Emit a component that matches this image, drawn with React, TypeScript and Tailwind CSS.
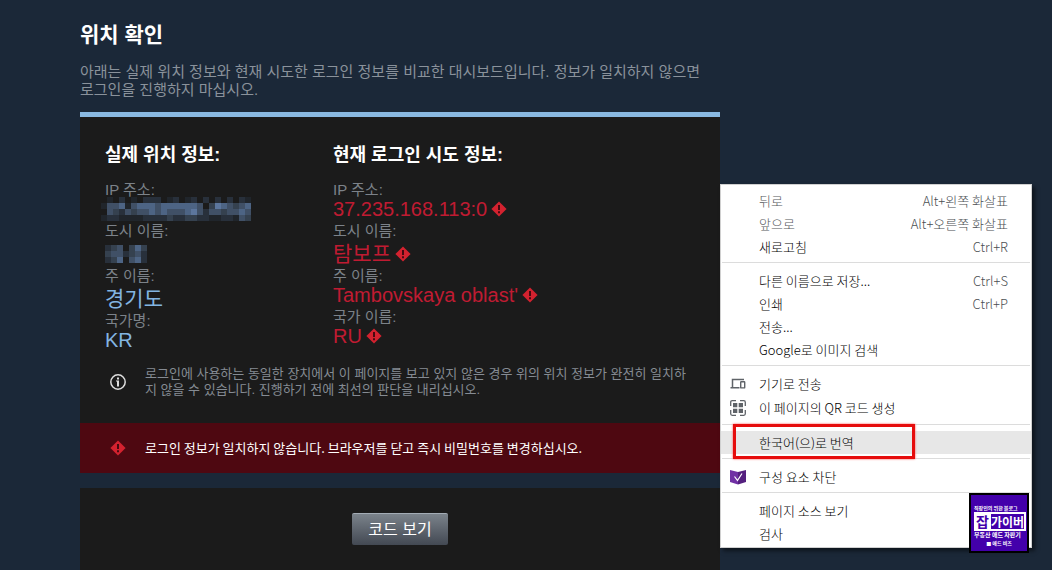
import { clsx } from "clsx";

const palette = ["transparent", "#20252b", "#28303b", "#35414f", "#405066", "#4d6484", "#5c769d"];

const ipMosaic = [
  "0102010222012012020202021",
  "1445145554555555403654345",
  "0432434454544456424434454",
  "1221111222232233221122143",
];

const cityMosaic = ["2340353", "3442342", "2350452"];

type Row = {
  label: string;
  value?: string;
  mosaic?: string[];
  tall?: boolean;
};

const realLocation: Row[] = [
  { label: "IP 주소:", mosaic: ipMosaic },
  { label: "도시 이름:", mosaic: cityMosaic, tall: true },
  { label: "주 이름:", value: "경기도", tall: true },
  { label: "국가명:", value: "KR" },
];

const loginAttempt: Row[] = [
  { label: "IP 주소:", value: "37.235.168.113:0" },
  { label: "도시 이름:", value: "탐보프", tall: true },
  { label: "주 이름:", value: "Tambovskaya oblast'" },
  { label: "국가 이름:", value: "RU" },
];

type MenuItem = {
  label: string;
  shortcut?: string;
  disabled?: boolean;
  active?: boolean;
  icon?: "devices" | "qr" | "shield";
};

const menuGroups: MenuItem[][] = [
  [
    { label: "뒤로", shortcut: "Alt+왼쪽 화살표", disabled: true },
    { label: "앞으로", shortcut: "Alt+오른쪽 화살표", disabled: true },
    { label: "새로고침", shortcut: "Ctrl+R" },
  ],
  [
    { label: "다른 이름으로 저장...", shortcut: "Ctrl+S" },
    { label: "인쇄", shortcut: "Ctrl+P" },
    { label: "전송..." },
    { label: "Google로 이미지 검색" },
  ],
  [
    { label: "기기로 전송", icon: "devices" },
    { label: "이 페이지의 QR 코드 생성", icon: "qr" },
  ],
  [{ label: "한국어(으)로 번역", active: true }],
  [{ label: "구성 요소 차단", icon: "shield" }],
  [{ label: "페이지 소스 보기" }, { label: "검사" }],
];

function Mosaic({ rows }: { rows: string[] }) {
  return (
    <svg
      width={rows[0].length * 6}
      height={rows.length * 6}
      shapeRendering="crispEdges"
      className="shrink-0"
      aria-hidden="true"
    >
      {rows.map((row, y) =>
        row.split("").map((cell, x) => (
          <rect key={`${x}-${y}`} x={x * 6} y={y * 6} width="6" height="6" fill={palette[Number(cell)]} />
        ))
      )}
    </svg>
  );
}

function WarningIcon() {
  return (
    <svg width="16" height="16" viewBox="0 0 16 16" className="shrink-0" aria-hidden="true">
      <path d="M8 .4 15.6 8 8 15.6.4 8Z" fill="#d3222f" />
      <path d="M7 4h2v5H7zM7 10.2h2v2H7z" fill="#450a10" />
    </svg>
  );
}

function InfoIcon() {
  return (
    <svg width="16" height="16" viewBox="0 0 16 16" className="shrink-0" aria-hidden="true">
      <circle cx="8" cy="8" r="7.2" fill="none" stroke="#dedede" strokeWidth="1.5" />
      <path d="M7 3.4h2v2H7zM6 6.4h3v6H7v-5H6z" fill="#dedede" />
    </svg>
  );
}

function MenuIcon({ name }: { name: MenuItem["icon"] }) {
  if (name === "devices") {
    return (
      <svg width="16" height="16" viewBox="0 0 16 16" aria-hidden="true">
        <path d="M14 3.5H2.5V11M.5 11.8h9" fill="none" stroke="#5f6368" strokeWidth="1.5" />
        <rect x="10.7" y="5.7" width="4" height="6.2" rx=".5" fill="none" stroke="#5f6368" strokeWidth="1.4" />
      </svg>
    );
  }
  if (name === "qr") {
    return (
      <svg width="16" height="16" viewBox="0 0 16 16" aria-hidden="true">
        <path
          d="M6 .7H2.2Q.7.7.7 2.2V6M10 .7h3.8q1.5 0 1.5 1.5V6M.7 10v3.8q0 1.5 1.5 1.5H6M15.3 10v3.8q0 1.5-1.5 1.5H10"
          fill="none"
          stroke="#5f6368"
          strokeWidth="1.3"
        />
        <path d="M3 3h4.3v4.3H3zM8.7 3H13v4.3H8.7zM3 8.7h4.3V13H3zM8.7 8.7H13V13H8.7z" fill="#5f6368" />
      </svg>
    );
  }
  if (name === "shield") {
    return (
      <svg width="16" height="16" viewBox="0 0 16 16" aria-hidden="true">
        <path d="M0 1 8 3v12.5L0 13z" fill="#7030a4" />
        <path d="M16 1 8 3v12.5l8-2.5z" fill="#55207f" />
        <path d="m4.5 7.5 3 4 4.5-7" fill="none" stroke="#fff" strokeWidth="1.2" />
      </svg>
    );
  }
  return null;
}

function LocationColumn({ title, rows, warn }: { title: string; rows: Row[]; warn?: boolean }) {
  return (
    <section>
      <h2 className="mb-[13px] text-[18px] leading-[26px] font-bold text-white">{title}</h2>
      <dl>
        {rows.map((row) => (
          <div key={row.label}>
            <dt className="text-[15px] leading-[18px] text-[#7c8289]">{row.label}</dt>
            <dd
              className={clsx(
                "flex items-center gap-1",
                row.tall ? "h-[27px] text-[21px]" : "h-[23px] pb-1 text-[20px]",
                row.mosaic === ipMosaic && "-ml-1",
                warn ? "text-[#c01b32]" : "text-[#83b5e2]"
              )}
            >
              {row.mosaic ? <Mosaic rows={row.mosaic} /> : row.value}
              {warn && <WarningIcon />}
            </dd>
          </div>
        ))}
      </dl>
    </section>
  );
}

function ContextMenu() {
  return (
    <div
      role="menu"
      className="absolute top-[184px] left-full w-[312px] border border-[#d0d0d0] bg-white pt-1 pb-0.5 font-['Noto_Sans_CJK_KR',sans-serif] text-[13px] font-light shadow-[3px_3px_4px_rgba(0,0,0,0.5)]"
    >
      {menuGroups.map((group, i) => (
        <div key={i}>
          {i > 0 && <hr className="mx-px mt-1 mb-1.5 border-[#dcdcdc]" />}
          {group.map((item) => (
            <button
              key={item.label}
              type="button"
              role="menuitem"
              disabled={item.disabled}
              className={clsx(
                "relative flex w-full items-center pr-[23px] pl-[9px] text-left",
                i === 2 ? "h-6" : "h-[23px]",
                item.active && "bg-[#e7e7e7]",
                item.disabled ? "text-[#55585c]" : "text-black"
              )}
            >
              <span className="w-[29px]">
                <MenuIcon name={item.icon} />
              </span>
              <span>{item.label}</span>
              {item.shortcut && <span className="ml-auto text-[#4a4d51]">{item.shortcut}</span>}
              {item.active && (
                <span className="absolute -top-[7px] left-3 h-[35px] w-[182px] border-3 border-[#e60d0d] shadow-[0_0_2px_#ff5050]" />
              )}
            </button>
          ))}
        </div>
      ))}
      <BlogBadge />
    </div>
  );
}

function BlogBadge() {
  return (
    <div className="absolute right-0.5 -bottom-1.5 flex h-[60px] w-[60px] flex-col items-start border-2 border-black bg-[#4300ab] px-[3px] pt-2 font-bold whitespace-nowrap text-white">
      <span className="text-[5px] leading-[9px]">직장인의 위한 블로그</span>
      <div className="flex h-[19px] w-[52px] items-center bg-white p-0.5">
        <span className="w-[15px] text-[14px] leading-[15px] text-[#4300ab]">잡</span>
        <span className="flex h-[15px] flex-1 items-center justify-center bg-[#4300ab] text-[12px]">가이버</span>
      </div>
      <span className="text-[6px] leading-[8px]">부동산 애드 자판기</span>
      <span className="self-center text-[5px] leading-[7px]">■ 애드 비즈</span>
    </div>
  );
}

export default function App() {
  return (
    <div className="min-h-screen overflow-hidden bg-[#1b2838] pl-20 font-['Liberation_Sans','Noto_Sans_CJK_KR',sans-serif]">
      <main className="relative max-w-[640px] pt-[21px]">
        <h1 className="mb-3.5 text-[21px] leading-[28px] font-bold text-white">위치 확인</h1>
        <p className="mb-[13px] text-[15px] leading-[18px] break-keep text-[#8a929b]">
          아래는 실제 위치 정보와 현재 시도한 로그인 정보를 비교한 대시보드입니다. 정보가 일치하지 않으면 로그인을
          진행하지 마십시오.
        </p>

        <div className="border-t-5 border-[#8ab9e1] bg-[#1b1b1b] p-[25px]">
          <div className="grid grid-cols-[228px_1fr]">
            <LocationColumn title="실제 위치 정보:" rows={realLocation} />
            <LocationColumn title="현재 로그인 시도 정보:" rows={loginAttempt} warn />
          </div>
          <div className="mt-[13px] flex items-center gap-[19px] pl-[5px]">
            <InfoIcon />
            <p className="text-[13px] leading-[16px] text-[#858b93]">
              로그인에 사용하는 동일한 장치에서 이 페이지를 보고 있지 않은 경우 위의 위치 정보가 완전히 일치하지 않을
              수 있습니다. 진행하기 전에 최선의 판단을 내리십시오.
            </p>
          </div>
        </div>

        <div role="alert" className="flex h-[50px] items-center gap-[19px] bg-[#4e0811] pl-[30px]">
          <WarningIcon />
          <p className="font-['Noto_Sans_CJK_KR',sans-serif] text-[13px] text-white">
            로그인 정보가 일치하지 않습니다. 브라우저를 닫고 즉시 비밀번호를 변경하십시오.
          </p>
        </div>

        <div className="mt-[15px] flex justify-center bg-[#1b1b1b] py-[25px]">
          <button
            type="button"
            className="h-8 rounded-xs border-t border-[#a3acb5] bg-linear-to-b from-[#7b838b] to-[#434953] px-4 text-[16px] text-white"
          >
            코드 보기
          </button>
        </div>

        <ContextMenu />
      </main>
    </div>
  );
}
